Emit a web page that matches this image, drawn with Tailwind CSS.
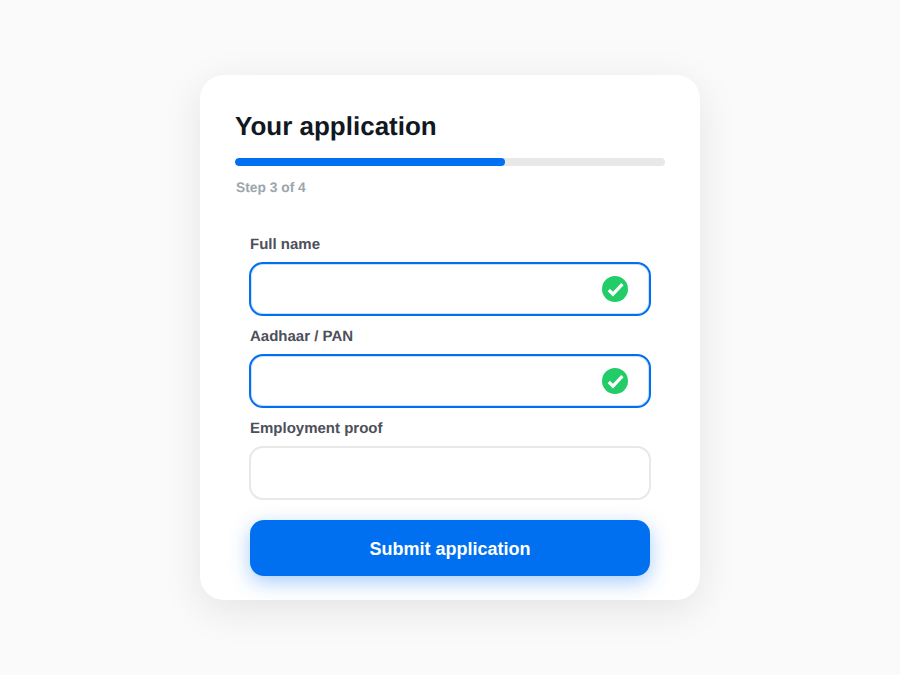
<!DOCTYPE html>
<html lang="en">

<head>
    <meta charset="UTF-8">
    <title>Your application</title>
    <script src="https://cdn.jsdelivr.net/npm/@tailwindcss/browser@4"></script>
</head>

<body class="bg-[#fafafa] h-[675px] w-[900px] overflow-hidden antialiased [text-rendering:geometricPrecision] font-['Liberation_Sans',Arial,sans-serif]">

    <div class="pt-[75px] flex justify-center">
        <div class="bg-white w-[500px] h-[525px] rounded-[24px] shadow-[0_10px_40px_rgba(0,0,0,0.09)] px-[35px] pt-[35px]">
            <h2 class="text-[26px] leading-[32px] font-bold text-[#12181f]">Your application</h2>

            <div class="mt-[16px] h-[8px] rounded-full bg-[#e8e8e8] overflow-hidden">
                <div class="h-full bg-[#0070f0] rounded-full" style="width: 62.8%"></div>
            </div>
            <p class="mt-[14px] ml-[1px] text-[13.8px] leading-[16px] font-bold text-[#9ca6ab]">Step 3 of 4</p>

            <form class="mt-[39px] mx-[15px]">
                <label class="block text-[15px] leading-[20px] font-bold text-[#4d4f5a]">Full name</label>
                <div class="mt-[7px] -mx-[1px] h-[54px] rounded-[14px] border-2 border-[#0070f0] shadow-[inset_0_0_0_1px_rgba(0,112,240,0.2)] flex items-center justify-end pr-[21px]">
                    <svg width="26" height="26" viewBox="0 0 26 26">
                        <circle cx="13" cy="13" r="13" fill="#22cc66" />
                        <path d="M6.8 14l4.2 4.2 9.4-10" fill="none" stroke="#fff" stroke-width="3.2" />
                    </svg>
                </div>

                <label class="block mt-[11px] text-[15px] leading-[20px] font-bold text-[#4d4f5a]">Aadhaar / PAN</label>
                <div class="mt-[7px] -mx-[1px] h-[54px] rounded-[14px] border-2 border-[#0070f0] shadow-[inset_0_0_0_1px_rgba(0,112,240,0.2)] flex items-center justify-end pr-[21px]">
                    <svg width="26" height="26" viewBox="0 0 26 26">
                        <circle cx="13" cy="13" r="13" fill="#22cc66" />
                        <path d="M6.8 14l4.2 4.2 9.4-10" fill="none" stroke="#fff" stroke-width="3.2" />
                    </svg>
                </div>

                <label class="block mt-[11px] text-[15px] leading-[20px] font-bold text-[#4d4f5a]">Employment proof</label>
                <div class="mt-[7px] -mx-[1px] h-[54px] rounded-[14px] border-2 border-[#e8e8e8]"></div>

                <button type="button" class="mt-[20px] w-full h-[56px] pt-[2px] rounded-[14px] bg-[#0070f0] text-white text-[18px] font-bold shadow-[0_6px_20px_rgba(0,112,240,0.35)]">Submit application</button>
            </form>
        </div>
    </div>

</body>

</html>
